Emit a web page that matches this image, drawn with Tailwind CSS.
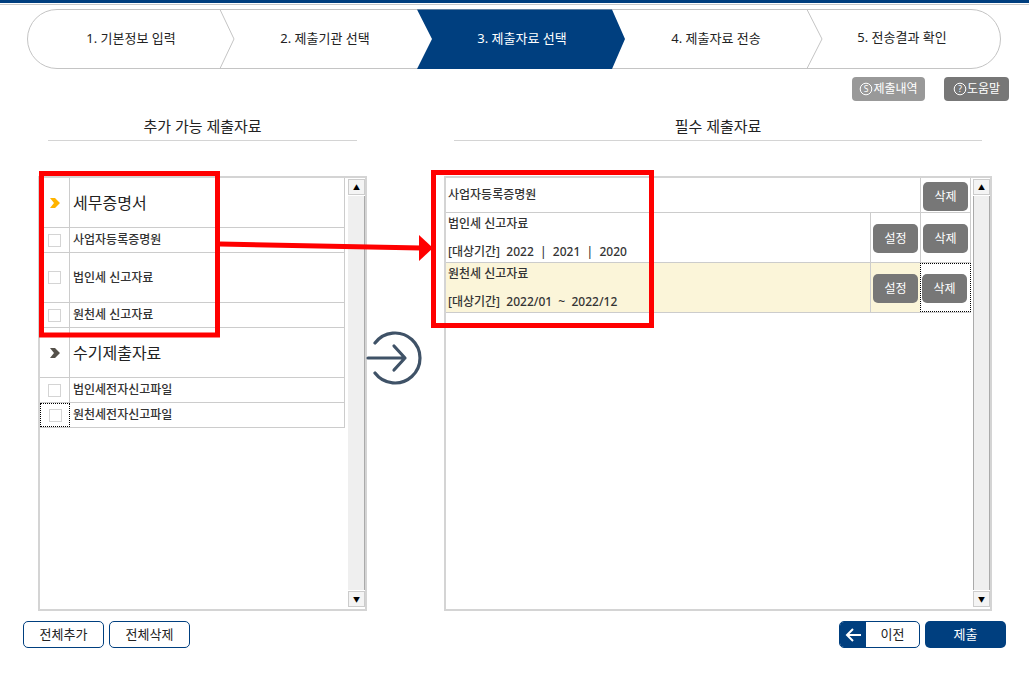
<!DOCTYPE html>
<html lang="ko">
<head>
  <meta charset="UTF-8" />
  <title>제출자료 선택</title>
  <script src="https://cdn.jsdelivr.net/npm/@tailwindcss/browser@4"></script>
</head>
<body class="bg-white text-[#333] font-['Noto_Sans','Noto_Sans_CJK_KR',sans-serif]">
  <div class="relative w-[1029px] h-[685px] overflow-hidden">
    <!-- top bar -->
    <div class="h-[3px] bg-[#003f7f]"></div>
    <div class="h-px mt-px bg-[#c8c8c8]"></div>

    <!-- stepper -->
    <div class="relative w-[975px] h-[60px] ml-[27px] mt-[4px]">
      <svg class="absolute inset-0" width="975" height="60" viewBox="0 0 975 60" fill="none">
        <rect x="0.5" y="0.5" width="973" height="59" rx="29.5" fill="#fff" stroke="#c4c4c4" />
        <path d="M193 0.5L207 30L193 59.5" stroke="#c4c4c4" />
        <path d="M780 0.5L795 30L780 59.5" stroke="#c4c4c4" />
        <path d="M390 0.5H585L598 30L585 60H390L405 30Z" fill="#003f7f" />
      </svg>
      <div class="relative h-full grid grid-cols-[208px_180px_214px_174px_198px] items-center text-center text-[13px] text-[#222]">
        <span>1. 기본정보 입력</span>
        <span>2. 제출기관 선택</span>
        <span class="text-white">3. 제출자료 선택</span>
        <span>4. 제출자료 전송</span>
        <span class="-mt-[2px]">5. 전송결과 확인</span>
      </div>
    </div>

    <!-- small actions -->
    <div class="flex justify-end gap-[19px] pr-[20px] mt-[8px] text-[12px] text-white">
      <button class="w-[73px] h-[24px] rounded-[4px] bg-[#999] flex items-center justify-center">
        <svg width="14" height="14" viewBox="0 0 14 14" fill="none" stroke="#fff"><circle cx="7" cy="7" r="5.8" /><text x="7" y="10" text-anchor="middle" font-size="8.5" fill="#fff" stroke="none">S</text></svg>
        <span>제출내역</span>
      </button>
      <button class="w-[65px] h-[24px] rounded-[4px] bg-[#777] flex items-center justify-center">
        <svg width="14" height="14" viewBox="0 0 14 14" fill="none" stroke="#fff"><circle cx="7" cy="7" r="5.8" /><text x="7" y="10" text-anchor="middle" font-size="8.5" fill="#fff" stroke="none">?</text></svg>
        <span>도움말</span>
      </button>
    </div>

    <!-- titles -->
    <div class="flex mt-[14px] text-[15px] text-[#222] text-center">
      <div class="w-[309px] ml-[48px] h-[26px] border-b border-[#d4d4d4]">추가 가능 제출자료</div>
      <div class="w-[528px] ml-[97px] h-[26px] border-b border-[#d4d4d4]">필수 제출자료</div>
    </div>

    <!-- panels -->
    <div class="flex mt-[35px] ml-[38px]">
      <div class="flex w-[329px] h-[435px] border-2 border-[#d4d4d4] text-[12px] font-medium">
        <div class="w-[305px]">
          <div class="flex h-[50px] border-b border-r border-[#ccc]">
            <div class="w-[30px] flex items-center justify-center border-r border-[#ccc]">
              <svg width="12" height="12" viewBox="0 0 12 12"><path d="M1 1H6L11 6L6 11H1L5 6Z" fill="#ffb400" /></svg>
            </div>
            <div class="flex items-center pl-[3px] text-[16px] font-normal text-[#222]">세무증명서</div>
          </div>
          <div class="flex h-[25px] border-b border-r border-[#ccc]">
            <div class="w-[30px] flex items-center justify-center border-r border-[#ccc]"><span class="w-[13px] h-[13px] border border-[#d4d4d4]"></span></div>
            <div class="flex items-center pl-[3px]">사업자등록증명원</div>
          </div>
          <div class="flex h-[50px] border-b border-r border-[#ccc]">
            <div class="w-[30px] flex items-center justify-center border-r border-[#ccc]"><span class="w-[13px] h-[13px] border border-[#d4d4d4]"></span></div>
            <div class="flex items-center pl-[3px]">법인세 신고자료</div>
          </div>
          <div class="flex h-[25px] border-b border-r border-[#ccc]">
            <div class="w-[30px] flex items-center justify-center border-r border-[#ccc]"><span class="w-[13px] h-[13px] border border-[#d4d4d4]"></span></div>
            <div class="flex items-center pl-[3px]">원천세 신고자료</div>
          </div>
          <div class="flex h-[50px] border-b border-r border-[#ccc]">
            <div class="w-[30px] flex items-center justify-center border-r border-[#ccc]">
              <svg width="12" height="12" viewBox="0 0 12 12"><path d="M1 1H6L11 6L6 11H1L5 6Z" fill="#55514a" /></svg>
            </div>
            <div class="flex items-center pl-[3px] text-[16px] font-normal text-[#222]">수기제출자료</div>
          </div>
          <div class="flex h-[25px] border-b border-r border-[#ccc]">
            <div class="w-[30px] flex items-center justify-center border-r border-[#ccc]"><span class="w-[13px] h-[13px] border border-[#d4d4d4]"></span></div>
            <div class="flex items-center pl-[3px]">법인세전자신고파일</div>
          </div>
          <div class="flex h-[25px] border-b border-r border-[#ccc]">
            <div class="w-[30px] flex items-center justify-center border border-dotted border-black"><span class="w-[13px] h-[13px] border border-[#d4d4d4]"></span></div>
            <div class="flex items-center pl-[3px]">원천세전자신고파일</div>
          </div>
        </div>
        <div class="ml-[3px] w-[17px] pt-px pb-[2px] flex flex-col gap-px">
          <div class="h-[16px] flex items-center justify-center bg-[#f4f4f4] border border-[#ccc] text-[7px] leading-none text-black">▲</div>
          <div class="flex-1 bg-[#efefef] border-r border-[#aaa]"></div>
          <div class="h-[16px] flex items-center justify-center bg-[#f4f4f4] border border-[#ccc] text-[7px] leading-none text-black">▼</div>
        </div>
      </div>

      <!-- move icon -->
      <div class="w-[77px] pt-[155px]">
        <svg class="ml-[-1px]" width="60" height="56" viewBox="0 0 60 56" fill="none" stroke="#3f5267" stroke-width="3.2" stroke-linecap="round" stroke-linejoin="round">
          <path d="M9 12A25 25 0 1 1 9 42" />
          <path d="M2 27H39M28 15L39 27L28 39" />
        </svg>
      </div>

      <div class="flex w-[548px] h-[435px] border-2 border-[#d4d4d4] text-[12px] font-medium">
        <div class="w-[525px]">
          <div class="flex h-[35px] border-b border-[#ccc]">
            <div class="flex-1 flex items-center pl-[2px]">사업자등록증명원</div>
            <div class="w-[51px] border-l border-r border-[#ccc] pl-[2px] pt-[4px]">
              <button class="w-[45px] h-[29px] rounded-[5px] bg-[#777] text-white font-normal">삭제</button>
            </div>
          </div>
          <div class="flex h-[50px] border-b border-[#ccc]">
            <div class="flex-1 flex flex-col justify-between pl-[2px] pt-[2px] pb-px">
              <span>법인세 신고자료</span>
              <span>[대상기간]&nbsp; 2022 &nbsp;|&nbsp; 2021 &nbsp;|&nbsp; 2020</span>
            </div>
            <div class="w-[50px] border-l border-[#ccc] pl-[2px] pt-[11px]">
              <button class="w-[45px] h-[29px] rounded-[5px] bg-[#777] text-white font-normal">설정</button>
            </div>
            <div class="w-[51px] border-l border-r border-[#ccc] pl-[2px] pt-[11px]">
              <button class="w-[45px] h-[29px] rounded-[5px] bg-[#777] text-white font-normal">삭제</button>
            </div>
          </div>
          <div class="flex h-[50px] border-b border-[#ccc] bg-[#fbf5d9]">
            <div class="flex-1 flex flex-col justify-between pl-[2px] pt-[2px] pb-px">
              <span>원천세 신고자료</span>
              <span>[대상기간]&nbsp; 2022/01 &nbsp;~&nbsp; 2022/12</span>
            </div>
            <div class="w-[50px] border-l border-[#ccc] pl-[2px] pt-[11px]">
              <button class="w-[45px] h-[29px] rounded-[5px] bg-[#777] text-white font-normal">설정</button>
            </div>
            <div class="w-[51px] border border-dotted border-black bg-white pl-[1px] pt-[10px]">
              <button class="w-[45px] h-[29px] rounded-[5px] bg-[#777] text-white font-normal">삭제</button>
            </div>
          </div>
        </div>
        <div class="ml-[2px] w-[17px] pt-px pb-[2px] flex flex-col gap-px">
          <div class="h-[16px] flex items-center justify-center bg-[#f4f4f4] border border-[#ccc] text-[7px] leading-none text-black">▲</div>
          <div class="flex-1 bg-[#efefef] border-r border-l border-[#aaa]"></div>
          <div class="h-[16px] flex items-center justify-center bg-[#f4f4f4] border border-[#ccc] text-[7px] leading-none text-black">▼</div>
        </div>
      </div>
    </div>

    <!-- footer buttons -->
    <div class="flex mt-[10px] px-[23px] text-[13px] text-[#222]">
      <button class="w-[81px] h-[27px] rounded-[5px] border border-[#003f7f]">전체추가</button>
      <button class="w-[81px] h-[27px] ml-[5px] rounded-[5px] border border-[#003f7f]">전체삭제</button>
      <button class="w-[81px] h-[27px] ml-auto rounded-[5px] border border-[#003f7f] flex overflow-hidden">
        <span class="w-[26px] h-full bg-[#003f7f] flex items-center justify-center">
          <svg width="16" height="14" viewBox="0 0 16 14" fill="none" stroke="#fff" stroke-width="2"><path d="M16 7H2M8 1L2 7L8 13" /></svg>
        </span>
        <span class="flex-1 self-center">이전</span>
      </button>
      <button class="w-[81px] h-[27px] ml-[5px] rounded-[5px] bg-[#003f7f] text-white">제출</button>
    </div>

    <!-- red annotation -->
    <svg class="absolute inset-0 pointer-events-none" width="1029" height="685" fill="none">
      <rect x="41.5" y="173.5" width="176" height="161.500" stroke="#ff0000" stroke-width="5" />
      <rect x="433.500" y="172.500" width="218" height="153" stroke="#ff0000" stroke-width="5" />
      <path d="M220 244L421 248" stroke="#ff0000" stroke-width="5" />
      <path d="M419 235L433 248L419 261Z" fill="#ff0000" />
    </svg>
  </div>
</body>
</html>
